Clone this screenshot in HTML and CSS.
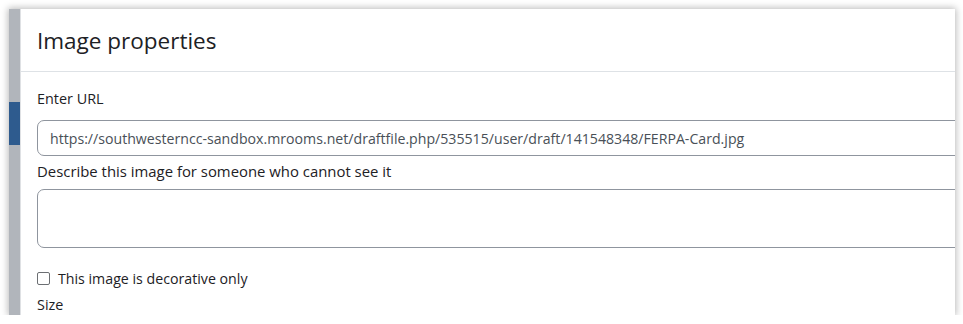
FILE: index.html
```html
<!DOCTYPE html>
<html lang="en">
<head>
<meta charset="utf-8">
<title>Image properties</title>
<link rel="stylesheet" href="styles.css">
</head>
<body>
<div class="frame">
  <div class="strip"><div class="strip-active"></div></div>
  <div class="modal">
    <div class="modal-header"><h5 class="modal-title">Image properties</h5></div>
    <div class="modal-body">
      <div class="group">
        <label class="label" for="url">Enter URL</label>
        <input class="control" id="url" type="text" value="https://southwesterncc-sandbox.mrooms.net/draftfile.php/535515/user/draft/141548348/FERPA-Card.jpg">
      </div>
      <div class="group">
        <label class="label label-wide" for="alt">Describe this image for someone who cannot see it</label>
        <textarea class="control area" id="alt"></textarea>
      </div>
      <div class="check">
        <span class="box"></span>
        <span class="check-label">This image is decorative only</span>
      </div>
      <div class="label size">Size</div>
    </div>
  </div>
</div>
</body>
</html>
```
FILE: styles.css
```css
* { box-sizing: border-box; }
html, body { margin: 0; padding: 0; background: #fff; }
body {
  font-family: "Open Sans", "Noto Sans", sans-serif;
  color: #1d2125;
}
.frame {
  margin: 9px 0 0 9px;
  width: 946px;
  height: 306px;
  display: flex;
  overflow: hidden;
  box-shadow: 0 0 7px 1px rgba(0, 0, 0, 0.28);
}
.strip {
  width: 11px;
  flex: none;
  background: #b1b5bb;
}
.strip-active {
  margin-top: 93px;
  height: 43px;
  background: #2e5b8e;
}
.modal {
  flex: 1;
  min-width: 0;
  background: #fff;
  border-left: 1px solid #dfe1e4;
  overflow: hidden;
}
.modal-header {
  height: 63px;
  padding: 0 16px;
  border-bottom: 1px solid #dee2e6;
  display: flex;
  align-items: center;
}
.modal-title {
  margin: 0;
  font-size: 22.5px;
  font-weight: 400;
  color: #1d2125;
  white-space: nowrap;
}
.modal-body {
  padding: 16px 16px 0 16px;
}
.group {
  display: flex;
  flex-direction: column;
}
.label {
  font-size: 14.4px;
  line-height: 22px;
  margin-bottom: 10px;
  color: #1d2125;
  white-space: nowrap;
}
.label-wide { font-size: 14.9px; }
.control {
  width: 1000px;
  height: 36px;
  border: 1px solid #8f959e;
  border-radius: 7px;
  padding: 0 12px;
  font-family: inherit;
  font-size: 14.15px;
  color: #495057;
  background: #fff;
  margin-bottom: 4px;
}
.area {
  height: 59px;
  resize: none;
  margin-bottom: 20px;
  margin-top: -3px;
}
.check {
  display: flex;
  align-items: center;
  gap: 8px;
  height: 20px;
  margin-bottom: 6px;
}
.box {
  width: 13px;
  height: 13px;
  border: 1px solid #6c6f73;
  border-radius: 2px;
  background: #fff;
}
.check-label {
  font-size: 14.2px;
  white-space: nowrap;
}
.size { margin: 0; }
```
